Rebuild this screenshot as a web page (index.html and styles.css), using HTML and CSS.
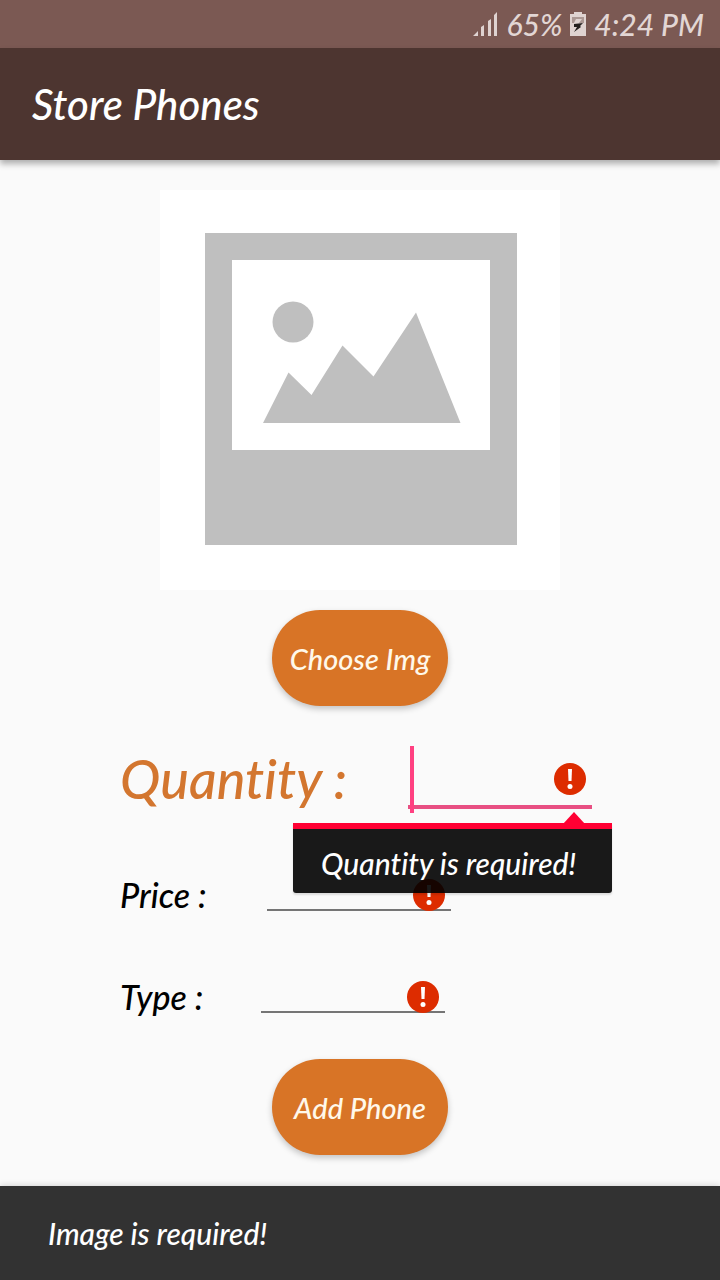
FILE: index.html
```html
<!DOCTYPE html>
<html lang="en">
<head>
<meta charset="utf-8">
<meta name="viewport" content="width=device-width, initial-scale=1">
<title>Store Phones</title>
<link rel="stylesheet" href="styles.css">
</head>
<body>
<div class="status-bar">
  <svg class="signal" viewBox="0 0 25 24" aria-hidden="true">
    <path d="M0 24 5 19V24ZM8 24V15L11 13V24ZM15 24V9L18 7V24ZM21 24V3L24 0V24Z"/>
  </svg>
  <span>65%</span>
  <svg class="battery" viewBox="0 0 16 24" aria-hidden="true">
    <path class="battery-body" d="M4 0H12V2H16V24H0V2H4Z"/>
    <path class="battery-empty" d="M2 5H14V11H2Z"/>
    <path class="battery-body" d="M6 7H12L9 11H4Z"/>
    <path class="battery-bolt" d="M13 11 4 12V15H7L4 20 11 15 10 14Z"/>
  </svg>
  <span>4:24 PM</span>
</div>
<header class="app-bar"><h1 class="title">Store Phones</h1></header>
<main class="content">
  <svg class="preview" viewBox="0 0 400 400" role="img" aria-label="No image selected">
    <rect width="400" height="400" fill="#fff"/>
    <path fill="#bfbfbf" fill-rule="evenodd" d="M45 43H357V355H45ZM72 70V260H330V70Z"/>
    <circle cx="133" cy="132" r="20.5" fill="#bfbfbf"/>
    <path fill="#bfbfbf" d="M103 233 128.5 182.500 151.500 205 182.500 155.500 213.500 186.500 256 122.500 300.500 233Z"/>
  </svg>
  <button class="button choose" type="button">Choose Img</button>
  <form class="form" id="phone-form">
    <div class="row">
      <label class="label label-large" for="quantity">Quantity :</label>
      <div class="field field-active">
        <input class="input" id="quantity" type="text" aria-describedby="quantity-error">
        <svg class="error-icon" viewBox="0 0 32 32" aria-hidden="true"><circle cx="16" cy="16" r="16" fill="#dd2c00"/><path fill="#fff" d="M14 6H18L17.500 18H14.500Z"/><circle cx="16" cy="23.500" r="2.500" fill="#fff"/></svg>
        <div class="error-popup" id="quantity-error">Quantity is required!</div>
      </div>
    </div>
    <div class="row">
      <label class="label" for="price">Price :</label>
      <div class="field">
        <input class="input" id="price" type="text">
        <svg class="error-icon" viewBox="0 0 32 32" aria-hidden="true"><circle cx="16" cy="16" r="16" fill="#dd2c00"/><path fill="#fff" d="M14 6H18L17.500 18H14.500Z"/><circle cx="16" cy="23.500" r="2.500" fill="#fff"/></svg>
      </div>
    </div>
    <div class="row">
      <label class="label label-short" for="type">Type :</label>
      <div class="field">
        <input class="input" id="type" type="text">
        <svg class="error-icon" viewBox="0 0 32 32" aria-hidden="true"><circle cx="16" cy="16" r="16" fill="#dd2c00"/><path fill="#fff" d="M14 6H18L17.500 18H14.500Z"/><circle cx="16" cy="23.500" r="2.500" fill="#fff"/></svg>
      </div>
    </div>
  </form>
  <button class="button add" type="submit" form="phone-form">Add Phone</button>
</main>
<div class="snackbar" role="status">Image is required!</div>
</body>
</html>
```
FILE: styles.css
```css
* { box-sizing: border-box; }

body {
  margin: 0;
  min-height: 100vh;
  display: flex;
  flex-direction: column;
  background: #fafafa;
  color: #000;
  font-family: Lato, sans-serif;
  font-style: italic;
  font-weight: 500;
  font-size: 30px;
  font-variant-ligatures: none;
}

.status-bar {
  display: flex;
  align-items: center;
  justify-content: flex-end;
  gap: 8px;
  height: 48px;
  padding: 0 16px;
  background: #7b5953;
  color: #e2d6d4;
}

.signal { width: 25px; height: 24px; fill: #dfd3d1; }
.battery { width: 16px; height: 24px; }
.battery-body { fill: #dfd3d1; }
.battery-empty { fill: #ab9894; }
.battery-bolt { fill: #231f1e; }

.app-bar {
  display: flex;
  align-items: center;
  height: 112px;
  padding: 0 32px;
  background: #4d3530;
  color: #fff;
  box-shadow: 0 4px 6px rgba(0, 0, 0, .3);
}

.title { margin: 0; font-size: 42px; font-weight: 500; }

.content {
  display: flex;
  flex-direction: column;
  align-items: center;
  padding: 30px 0;
}

.preview { width: 400px; height: 400px; }

.button {
  min-width: 176px;
  height: 96px;
  padding: 0 12px;
  border: 0;
  border-radius: 48px;
  background: #d87426;
  color: #fff8ea;
  font: inherit;
  font-size: 29px;
  box-shadow: 0 3px 6px rgba(0, 0, 0, .22);
}

.choose { margin-top: 20px; }
.add { margin-top: 46px; }

.form {
  width: 100%;
  display: flex;
  flex-direction: column;
  gap: 44px;
  margin-top: 40px;
  padding-left: 120px;
}

.row { display: flex; align-items: flex-end; gap: 58px; }

.label { width: 89px; font-size: 34px; line-height: 32px; white-space: nowrap; }
.label-short { width: 83px; }
.label-large {
  width: 230px;
  color: #d3762f;
  font-size: 54px;
  line-height: 60px;
}

.field {
  position: relative;
  width: 184px;
  height: 58px;
  border-bottom: 2px solid #757575;
}

.field-active { height: 63px; border-bottom: 4px solid #e84f83; }

.field-active::before {
  content: "";
  position: absolute;
  left: 2px;
  top: 0;
  width: 4px;
  height: 67px;
  background: #ff4081;
}

.input {
  width: 100%;
  height: 100%;
  padding: 0 40px 0 8px;
  border: 0;
  outline: 0;
  background: transparent;
  font: inherit;
}

.error-icon {
  position: absolute;
  right: 6px;
  bottom: -2px;
  width: 32px;
  height: 32px;
}

.field-active .error-icon { bottom: 10px; }

.error-popup {
  position: absolute;
  z-index: 1;
  top: 77px;
  right: -20px;
  min-width: 319px;
  height: 70px;
  padding: 4px 28px 0;
  border-top: 6px solid #ff0033;
  border-radius: 0 0 3px 3px;
  background: rgba(0, 0, 0, .9);
  background-clip: padding-box;
  box-shadow: 0 2px 2px rgba(0, 0, 0, .12);
  color: #fff;
  line-height: 60px;
  white-space: nowrap;
}

.error-popup::before {
  content: "";
  position: absolute;
  right: 27px;
  bottom: 100%;
  margin-bottom: 5px;
  border: solid transparent;
  border-width: 0 11px 12px;
  border-bottom-color: #ff0033;
}

.snackbar {
  margin-top: auto;
  padding: 30px 48px;
  background: #323232;
  color: #fff;
  line-height: 34px;
  box-shadow: 0 -1px 6px rgba(0, 0, 0, .15);
}
```
